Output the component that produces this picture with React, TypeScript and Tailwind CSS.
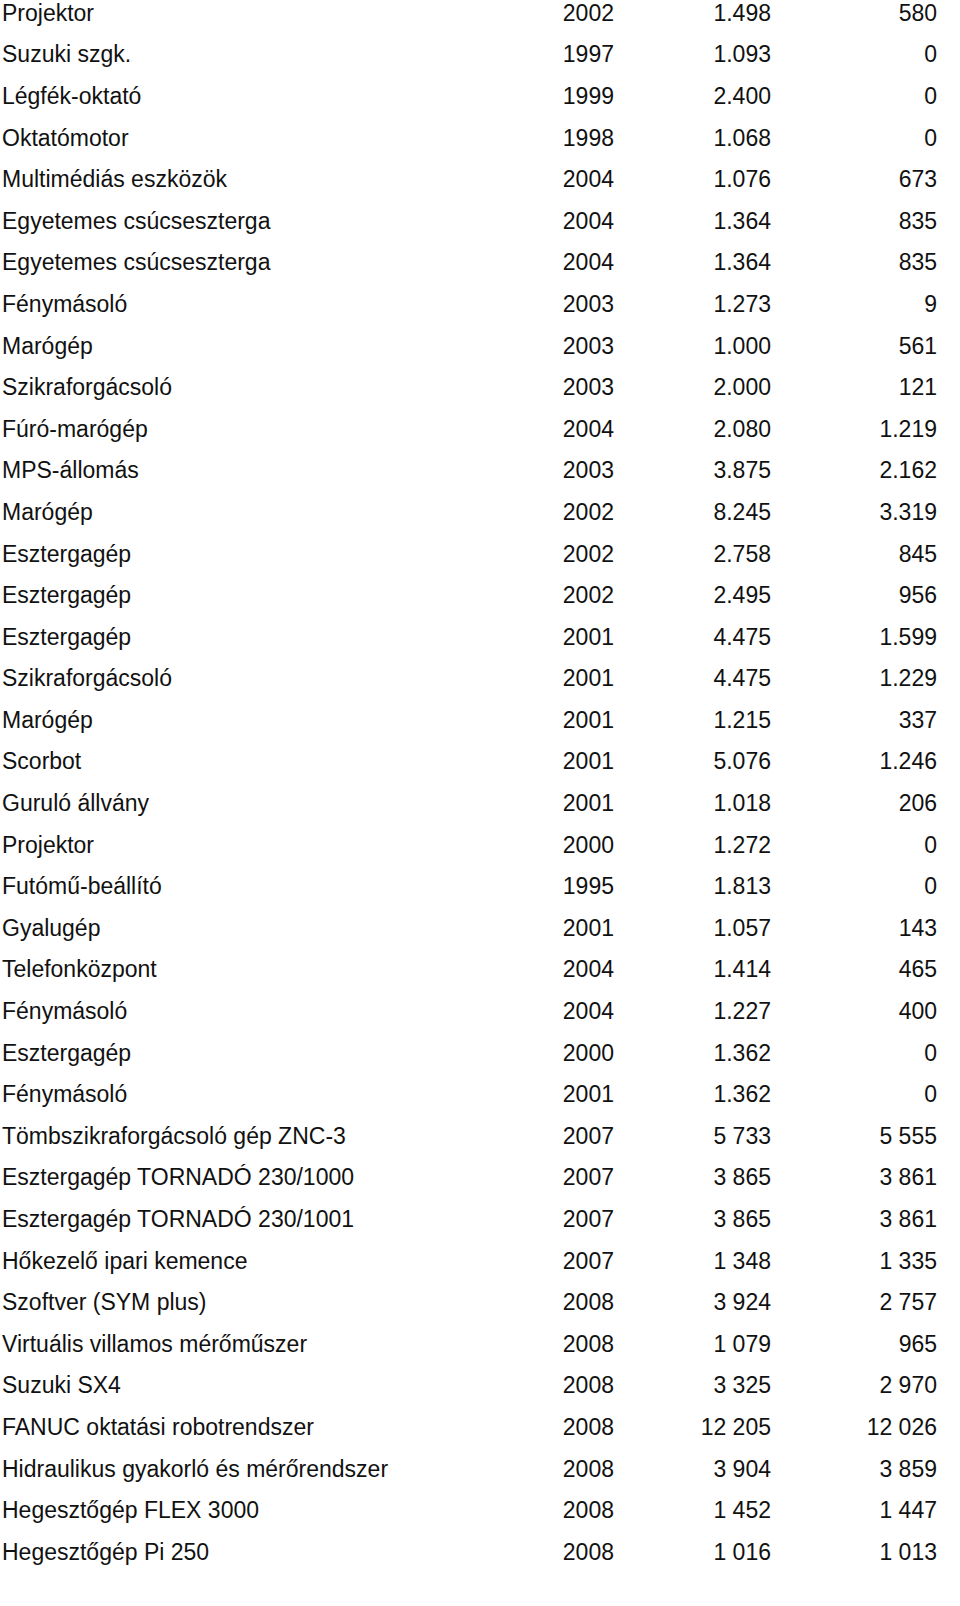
const rows: [string, string, string, string][] = [
  ["Projektor", "2002", "1.498", "580"],
  ["Suzuki szgk.", "1997", "1.093", "0"],
  ["Légfék-oktató", "1999", "2.400", "0"],
  ["Oktatómotor", "1998", "1.068", "0"],
  ["Multimédiás eszközök", "2004", "1.076", "673"],
  ["Egyetemes csúcseszterga", "2004", "1.364", "835"],
  ["Egyetemes csúcseszterga", "2004", "1.364", "835"],
  ["Fénymásoló", "2003", "1.273", "9"],
  ["Marógép", "2003", "1.000", "561"],
  ["Szikraforgácsoló", "2003", "2.000", "121"],
  ["Fúró-marógép", "2004", "2.080", "1.219"],
  ["MPS-állomás", "2003", "3.875", "2.162"],
  ["Marógép", "2002", "8.245", "3.319"],
  ["Esztergagép", "2002", "2.758", "845"],
  ["Esztergagép", "2002", "2.495", "956"],
  ["Esztergagép", "2001", "4.475", "1.599"],
  ["Szikraforgácsoló", "2001", "4.475", "1.229"],
  ["Marógép", "2001", "1.215", "337"],
  ["Scorbot", "2001", "5.076", "1.246"],
  ["Guruló állvány", "2001", "1.018", "206"],
  ["Projektor", "2000", "1.272", "0"],
  ["Futómű-beállító", "1995", "1.813", "0"],
  ["Gyalugép", "2001", "1.057", "143"],
  ["Telefonközpont", "2004", "1.414", "465"],
  ["Fénymásoló", "2004", "1.227", "400"],
  ["Esztergagép", "2000", "1.362", "0"],
  ["Fénymásoló", "2001", "1.362", "0"],
  ["Tömbszikraforgácsoló gép ZNC-3", "2007", "5 733", "5 555"],
  ["Esztergagép TORNADÓ 230/1000", "2007", "3 865", "3 861"],
  ["Esztergagép TORNADÓ 230/1001", "2007", "3 865", "3 861"],
  ["Hőkezelő ipari kemence", "2007", "1 348", "1 335"],
  ["Szoftver (SYM plus)", "2008", "3 924", "2 757"],
  ["Virtuális villamos mérőműszer", "2008", "1 079", "965"],
  ["Suzuki SX4", "2008", "3 325", "2 970"],
  ["FANUC oktatási robotrendszer", "2008", "12 205", "12 026"],
  ["Hidraulikus gyakorló és mérőrendszer", "2008", "3 904", "3 859"],
  ["Hegesztőgép FLEX 3000", "2008", "1 452", "1 447"],
  ["Hegesztőgép Pi 250", "2008", "1 016", "1 013"],
];

export default function App() {
  return (
    <div className="min-h-[1606px] w-[960px] overflow-hidden bg-white text-[#111] font-['Liberation_Sans',Arial,sans-serif] text-[23px]">
      <div className="-mt-[7.5px] pl-[2px] w-[937px]">
        {rows.map((r, i) => (
          <div
            key={i}
            className="grid grid-cols-[518px_94px_157px_166px] h-[41.6px] items-center leading-none"
          >
            <span className="whitespace-nowrap">{r[0]}</span>
            <span className="text-right">{r[1]}</span>
            <span className="text-right">{r[2]}</span>
            <span className="text-right">{r[3]}</span>
          </div>
        ))}
      </div>
    </div>
  );
}
